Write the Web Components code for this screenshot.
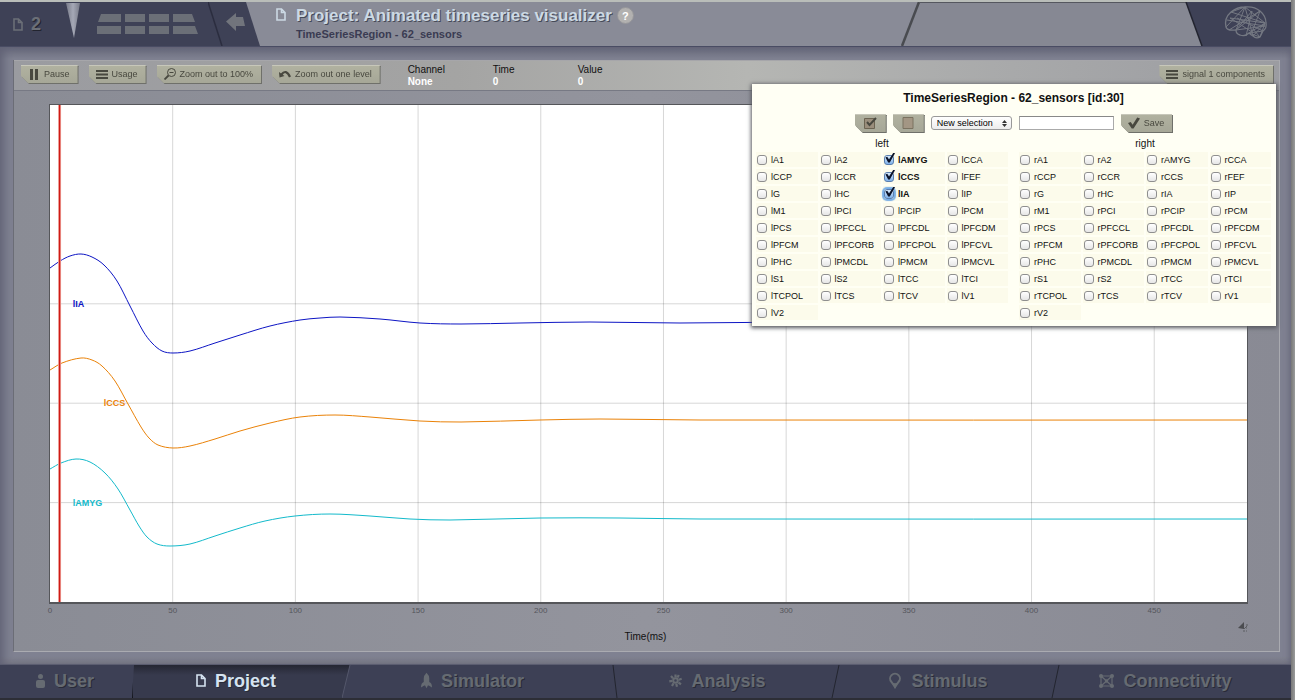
<!DOCTYPE html>
<html lang="en">
<head>
<meta charset="utf-8">
<title>Animated timeseries visualizer</title>
<style>
body { margin: 0; font-family: "Liberation Sans", Arial, sans-serif; font-size: 10px; line-height: 12px; color: #111; background: #8f9090; }
</style>
</head>
<body>
<app-shell>
  <app-header slot="header"></app-header>
  <work-area>
    <tool-bar slot="toolbar"></tool-bar>
    <time-chart></time-chart>
    <channel-panel slot="overlay" heading="TimeSeriesRegion - 62_sensors [id:30]"></channel-panel>
  </work-area>
  <nav-bar slot="footer"></nav-bar>
</app-shell>
<script>
const define = (name, html, setup) => customElements.define(name, class extends HTMLElement {
  constructor() {
    super();
    this.attachShadow({ mode: "open" });
  }
  connectedCallback() {
    const t = document.createElement("template");
    t.innerHTML = typeof html === "function" ? html(this) : html;
    this.shadowRoot.replaceChildren(t.content.cloneNode(true));
    if (setup) setup(this);
  }
});

const icons = {
  doc: '<svg width="10" height="13" viewBox="0 0 10 13" fill="none" stroke="currentColor" stroke-width="1.6"><path d="M1 1h4.500L9 4.500V12H1zM5.500 1v3.500H9"/></svg>',
  user: '<svg width="9" height="14" viewBox="0 0 9 14" fill="currentColor"><circle cx="4.500" cy="2.500" r="2.500"/><path d="M2 6h5q2 0 2 2v4q0 2-2 2H2q-2 0-2-2V8q0-2 2-2z"/></svg>',
  rocket: '<svg width="11" height="17" viewBox="0 0 12 17" fill="currentColor"><path d="M6 0Q3 3 3 6v4Q0 11 0 16l3.500-2h1L6 17l1.500-3h1L12 16q0-5-3-6V6q0-3-3-6z"/></svg>',
  gear: '<svg width="13" height="13" viewBox="0 0 13 13" stroke="currentColor"><circle cx="6.500" cy="6.500" r="2.300" fill="none" stroke-width="2"/><path d="M6.500 .5v3M2 2l2 2.300M.3 7.300l3-.5M3 12l1.500-2.700M8 12.700L7.300 9.700M12 10.300L9.500 8.500M12.700 4.800l-3 1M9.800 1L8.500 3.500" stroke-width="2.200"/></svg>',
  pin: '<svg width="14" height="17" viewBox="0 0 14 17"><path d="M7 15L3.500 10A4.900 4.900 0 1 1 10.500 10z" fill="none" stroke="currentColor" stroke-width="2"/><path d="M4 10.500q3 1.500 6 0L7 17z" fill="currentColor"/></svg>',
  net: '<svg width="15" height="14" viewBox="0 0 15 14" fill="none" stroke="currentColor" stroke-width="1.200"><path d="M2 2h11v10H2zM2 2l11 10M13 2L2 12"/><g fill="currentColor" stroke="none"><circle cx="2" cy="2" r="2"/><circle cx="13" cy="2" r="2"/><circle cx="2" cy="12" r="2"/><circle cx="13" cy="12" r="2"/><circle cx="7.500" cy="7" r="1.800"/></g></svg>',
  pause: '<svg width="12" height="11" viewBox="0 0 12 11" fill="currentColor"><path d="M2 0h3v11H2zM7 0h3v11H7z"/></svg>',
  bars: '<svg width="12" height="9" viewBox="0 0 12 9" fill="currentColor"><path d="M0 0h12v2H0zM0 3.500h12v2H0zM0 7h12v2H0z"/></svg>',
  zoom: '<svg width="12" height="12" viewBox="0 0 12 12" fill="none" stroke="currentColor"><circle cx="7.500" cy="4.500" r="4"/><path d="M5.500 4.500h4"/><path d="M4.500 7.500L.5 11.500" stroke-width="1.800"/></svg>',
  undo: '<svg width="12" height="10" viewBox="0 0 12 10"><path d="M2.500 5.500Q7-.5 11 8" fill="none" stroke="currentColor" stroke-width="2.200"/><path d="M0 3l5.500 4L.5 8.500z" fill="currentColor"/></svg>',
  boxcheck: '<svg width="13" height="12" viewBox="0 0 13 12" fill="none" stroke="currentColor"><path d="M.5 1.500h10v10H.5z" fill="#9a8e7c" stroke="#6c6452"/><path d="M3 5l2.500 3L12 1" stroke-width="2"/></svg>',
  box: '<svg width="13" height="12" viewBox="0 0 13 12"><path d="M1 .5h10v11H1z" fill="#a39684" stroke="#7a7260"/></svg>',
  check: '<svg width="12" height="12" viewBox="0 0 13 12"><path d="M0 6l3-1 2 3L10 0l3 1-7 11H4z" fill="currentColor"/></svg>'
};

define("app-shell", `
<style>
:host { display: block; padding-right: 4px; background: linear-gradient(90deg, #777, #9a9b9b) right / 4px 100% no-repeat; }
.page { display: flex; flex-direction: column; min-height: 100vh; box-sizing: border-box; border-top: 2px solid #b9bdb9; }
</style>
<div class="page"><slot name="header"></slot><slot></slot><slot name="footer"></slot></div>`);

define("app-header", `
<style>
:host { display: flex; height: 44px; background: #898b97; border-bottom: 1px solid #494c63; color: #6b6f77; overflow: hidden; }
.left { display: flex; align-items: center; width: 261px; flex: none; box-sizing: border-box; padding-left: 13px; background: #3e4156; clip-path: polygon(0 0, 246px 0, 260px 100%, 0 100%); }
.num { font: bold 18px/20px "Liberation Sans", sans-serif; margin-left: 8px; text-shadow: 1px 1px #22242f; }
.spike { align-self: start; margin-left: 24px; }
.blocks { margin-left: 16px; }
.sep { margin-left: 9px; }
.arrow { margin: 0 0 4px 2px; }
.title { flex: 1; display: flex; align-items: start; padding: 5px 0 0 15px; min-width: 0; white-space: nowrap; color: #ccd9e4; }
.title > svg { margin-top: 1px; }
.names { margin-left: 10px; }
h1 { margin: 0; font: bold 17px/18px "Liberation Sans", sans-serif; text-shadow: 1px 1px #454a58; }
h2 { margin: 2px 0 0; font: bold 11px/14px "Liberation Sans", sans-serif; color: #3a3b52; }
button { margin: 0 0 0 5px; padding: 0; width: 17px; height: 17px; border-radius: 50%; border: 1px solid #96969a; background: #b2b1b0; color: #fff; font: bold 11px/14px "Liberation Sans", sans-serif; }
.right { display: flex; flex: none; width: 390px; }
</style>
<div class="left">${icons.doc}<span class="num">2</span>
<svg class="spike" width="16" height="38" viewBox="0 0 16 38"><defs><linearGradient id="g"><stop offset="0" stop-color="#777a88"/><stop offset=".5" stop-color="#a5a8b6"/><stop offset="1" stop-color="#777a88"/></linearGradient></defs><path d="M1 1h14L9 36z" fill="url(#g)"/></svg>
<svg class="blocks" width="102" height="20" viewBox="0 0 102 20" fill="currentColor"><path d="M4 0h20v8H1zM28 0h20v8H28zM52 0h20v8H52zM76 0h19l3 8H76zM0 12h24v8H-2zM28 12h20v8H28zM52 12h20v8H52zM76 12h22l3 8H76z"/></svg>
<svg class="sep" width="16" height="44" viewBox="0 0 16 44"><path d="M0 0l14 44" stroke="#2b2d3f" stroke-width="1.500"/></svg>
<svg class="arrow" width="20" height="18" viewBox="0 0 20 18" fill="#71747c"><path d="M0 8.500L10 0v4h7l2 9h-9v5z"/></svg></div>
<div class="title">${icons.doc}<div class="names"><h1>Project: Animated timeseries visualizer</h1><h2>TimeSeriesRegion - 62_sensors</h2></div><button type="button" aria-label="Help">?</button></div>
<div class="right"><svg width="390" height="44" viewBox="0 0 390 44"><path d="M18 0H285l16 44H1z" fill="#868893"/><path d="M285 0H390V44H301z" fill="#3e4156"/><path d="M18 0L1 44" stroke="#494b50" stroke-width="2.500"/><path d="M18 .5H285" stroke="#55575f"/><path d="M285 0l16 44" stroke="#22242f" stroke-width="1.500"/>
<g fill="none" stroke="#747882" stroke-linejoin="round" transform="translate(324 4)"><path stroke-width="1.300" d="M1 21Q-1 12 6 6 12 1 20 1q9-1 15 4 6 5 6 12 1 5-3 8l-3 6q-4 2-7-1-2-1-4-3-4 4-9 2-4-1-4-5-9 1-10-3z"/><path d="M1 21L20 1 6 6l34 11L5 12l22 14L35 5 11 24 20 1l8 29 12-13L20 1M2 14l38 6-29 4L27 5l-6 25M35 5L4 24M24 27l14-2-26-13M35 31l5-14-16 10 11 4-7-8"/></g></svg></div>`);

define("work-area", `
<style>
:host { display: flex; position: relative; flex: 1; padding: 13px 11px 12px 13px; box-sizing: border-box; background: linear-gradient(#656779, #7f8191 12px, #7f8191 calc(100% - 8px), #7a7b87); box-shadow: inset 7px 0 8px -3px #626376, inset -4px 0 6px -3px #626376; }
.frame { flex: 1; display: flex; flex-direction: column; min-width: 0; background: linear-gradient(90deg, #8a8c95, #93949d 50%, #898a94); border: solid; border-width: 0 1px 1px; border-color: #6b6d76 #a9aab0 #aaabb1 #6b6d76; }
</style>
<div class="frame"><slot name="toolbar"></slot><slot></slot></div><slot name="overlay"></slot>`);

define("tool-button", el => `
<style>
:host { display: inline-block; filter: drop-shadow(1px 1px 0 #6f706a); }
button { display: flex; align-items: center; gap: 4px; height: 18px; margin: 0; padding: 0 8px 0 7px; border: 0; font: 9px/12px "Liberation Sans", sans-serif; color: #48483f; white-space: nowrap; background: linear-gradient(#b1b2a0, #a6a797); box-shadow: inset 0 1px #c7c7ba; clip-path: polygon(0 0, 100% 0, 100% 100%, 7px 100%, 0 calc(100% - 7px)); }
:host([icononly]) button { padding: 0 9px; }
</style>
<button type="button" ${el.hasAttribute("label") ? `aria-label="${el.getAttribute("label")}"` : ""}>${icons[el.getAttribute("icon")]}<slot></slot></button>`);

define("tool-bar", `
<style>
:host { display: flex; align-items: start; height: 31px; box-sizing: border-box; padding: 4px 6px 0 7px; gap: 11px; background: linear-gradient(90deg, #9a9ba0, #a4a4a3 35%, #b5b6b3 58%, #9b9ca1); border-bottom: 1px solid #777984; border-top: 1px solid #a6a6aa; white-space: nowrap; }
dl { display: flex; margin: -1px 0 0 17px; }
dl div { width: 85px; }
dt, dd { margin: 0; line-height: 12px; }
dd { color: #fff; font-weight: bold; }
.end { margin-left: auto; }
</style>
<tool-button icon="pause">Pause</tool-button>
<tool-button icon="bars">Usage</tool-button>
<tool-button icon="zoom">Zoom out to 100%</tool-button>
<tool-button icon="undo">Zoom out one level</tool-button>
<dl><div><dt>Channel</dt><dd>None</dd></div><div><dt>Time</dt><dd>0</dd></div><div><dt>Value</dt><dd>0</dd></div></dl>
<tool-button class="end" icon="bars">signal 1 components</tool-button>`);

const series = [
  { name: "lIA", color: "#0d15c4", x: "1.9%", y: "40%", points: [50,268,60,261,70,256,81,254,92,257,104,265,117,281,130,306,143,331,152,343,162,351,173,353,190,351,215,343,240,335,270,326,300,320,320,318,340,317,380,319,420,323,461,324,520,323,590,322,680,323,800,322,1247,322] },
  { name: "lCCS", color: "#ea8208", x: "4.5%", y: "60%", points: [50,370,62,363,81,358,92,360,102,366,115,381,128,404,141,427,149,438,158,445,173,448,190,446,215,439,240,431,270,423,300,417,335,415,370,417,420,421,461,422,540,420,600,419,700,420,1247,420] },
  { name: "lAMYG", color: "#13bacb", x: "1.9%", y: "80%", points: [50,469,61,463,76,459,90,462,105,473,118,489,130,510,139,526,147,537,157,544,170,546,190,544,215,536,240,528,265,521,295,516,330,514,370,516,410,519,450,520,540,518,620,518,700,519,1247,519] }
];
// Smooth curve through the samples, with control points at a third of the spacing.
const curve = p => {
  const n = p.length / 2, at = i => { i = Math.max(0, Math.min(n - 1, i)); return [p[2 * i], p[2 * i + 1]]; };
  const slope = i => { const a = at(i - 1), b = at(i + 1); return (b[1] - a[1]) / (b[0] - a[0]); };
  let d = `M${at(0)}`;
  for (let i = 0; i < n - 1; i++) {
    const a = at(i), b = at(i + 1), h = (b[0] - a[0]) / 3;
    d += `C${a[0] + h},${a[1] + slope(i) * h} ${b[0] - h},${b[1] - slope(i + 1) * h} ${b}`;
  }
  return d;
};
const ticks = [...Array(10).keys()];

define("time-chart", `
<style>
:host { display: flex; flex-direction: column; flex: 1; padding: 13px 31px 7px 35px; }
.plot { position: relative; flex: 1; min-height: 300px; background: #fff; border: solid #55565a; border-width: 1px 1px 2px; }
.plot svg { position: absolute; inset: 0; width: 100%; height: 100%; overflow: visible; }
.grid line { stroke: #000; stroke-opacity: .16; stroke-width: 1; }
.names text { font: bold 9px "Liberation Sans", sans-serif; }
.ticks text { font: 8px "Liberation Sans", sans-serif; fill: #55565c; text-anchor: middle; }
path { fill: none; stroke-width: 1; vector-effect: non-scaling-stroke; }
.foot { display: grid; grid-template-columns: 1fr auto 1fr; align-items: start; padding-top: 18px; height: 22px; line-height: 12px; }
.foot span { grid-column: 2; margin-top: 9px; margin-right: 6px; }
.foot svg { justify-self: end; }
</style>
<div class="plot"><svg role="img" aria-label="Time series of the selected channels">
<g class="grid">${ticks.slice(1).map(i => `<line x1="${i * 10.25}%" x2="${i * 10.25}%" y1="0" y2="100%"/>`).join("")}${[40, 60, 80].map(y => `<line x1="0" x2="100%" y1="${y}%" y2="${y}%"/>`).join("")}</g>
<svg viewBox="50 105 1197 497" preserveAspectRatio="none">${series.map(s => `<path d="${curve(s.points)}" stroke="${s.color}"/>`).join("")}</svg>
<line x1=".8%" x2=".8%" y1="0" y2="100%" stroke="#f3b5ae" stroke-width="3"/><line x1=".8%" x2=".8%" y1="0" y2="100%" stroke="#cf1a14" stroke-width="1.500"/>
<g class="names">${series.map(s => `<text x="${s.x}" y="${s.y}" dy="3" fill="${s.color}">${s.name}</text>`).join("")}</g>
<svg class="ticks" y="100%" height="14">${ticks.map(i => `<text x="${i * 10.25}%" y="11">${i * 50}</text>`).join("")}</svg>
</svg></div>
<div class="foot"><span>Time(ms)</span><svg width="10" height="10" viewBox="0 0 10 10"><path d="M0 6L6 0v7z" style="fill:#4b4c50"/><path d="M5 9h2M8 6h1M8 3h2M8 9h1M6 7l3-3" stroke="#5b5c60"/></svg></div>`);

define("channel-check", el => `
<style>
:host { display: block; background: #fcfbeb; }
label { display: flex; align-items: center; gap: 4px; height: 15px; padding-left: 1px; font-size: 9px; line-height: 12px; white-space: nowrap; color: #111; }
input { appearance: none; position: relative; flex: none; width: 10px; height: 10px; box-sizing: border-box; margin: 0; border: 1px solid #8f8f8f; border-radius: 3px; background: linear-gradient(#fff, #e6e6e6); }
input:checked { border-color: #5a7fb0; background: linear-gradient(#d7e8fa, #7fb1ea); }
input:checked::after { content: ""; position: absolute; left: 0; top: -3px; width: 10px; height: 10px; background: #0a1228; clip-path: polygon(5% 50%, 22% 42%, 40% 70%, 85% 0, 100% 8%, 48% 100%, 32% 100%); }
:host([focused]) input { box-shadow: 0 0 1px 2px #78aee6; }
:host([checked]) label { font-weight: bold; }
</style>
<label><input type="checkbox" ${el.hasAttribute("checked") ? "checked" : ""}><slot></slot></label>`);

const regions = "A1 A2 AMYG CCA CCP CCR CCS FEF G HC IA IP M1 PCI PCIP PCM PCS PFCCL PFCDL PFCDM PFCM PFCORB PFCPOL PFCVL PHC PMCDL PMCM PMCVL S1 S2 TCC TCI TCPOL TCS TCV V1 V2".split(" ");
const shown = new Set(["lAMYG", "lCCS", "lIA"]);
const side = (prefix, title) => `<div role="group" aria-label="${title}"><p>${title}</p><div class="cells">${regions.map(r => {
  const id = prefix + r;
  return `<channel-check${shown.has(id) ? " checked" : ""}${id === "lIA" ? " focused" : ""}>${id}</channel-check>`;
}).join("")}</div></div>`;

define("channel-panel", el => `
<style>
:host { display: block; position: absolute; top: 37px; right: 15px; width: 524px; box-sizing: border-box; padding: 6px 5px 6px 4px; background: #fffff4; box-shadow: 0 1px 4px 1px #55565c; }
h3 { margin: 0 0 8px; text-align: center; font: bold 12px/16px "Liberation Sans", sans-serif; }
.controls { display: flex; justify-content: center; align-items: center; gap: 7px; height: 18px; margin-bottom: 6px; }
.pick { position: relative; display: flex; }
select { appearance: none; width: 81px; height: 14px; margin: 0; padding: 0 0 0 5px; border: 1px solid #999; border-radius: 3px; background: linear-gradient(#fff, #ececec); font: 9px/12px "Liberation Sans", sans-serif; color: #000; }
.pick svg { position: absolute; right: 5px; top: 4px; pointer-events: none; }
input { width: 95px; height: 14px; box-sizing: border-box; margin: 0; padding: 0 3px; border: 1px solid #aaa; border-top-color: #888; background: #fff; font: 10px "Liberation Sans", sans-serif; }
.sides { display: grid; grid-template-columns: 1fr 1fr; gap: 11px; }
p { margin: 0 0 2px; text-align: center; line-height: 12px; }
.cells { display: grid; grid-template-columns: repeat(4, 1fr); gap: 2px; }
</style>
<h3>${el.getAttribute("heading")}</h3>
<div class="controls"><tool-button icon="boxcheck" icononly label="Select all"></tool-button><tool-button icon="box" icononly label="Clear selection"></tool-button>
<span class="pick"><select aria-label="Selection"><option>New selection</option></select><svg width="5" height="7" viewBox="0 0 5 7" fill="#333"><path d="M0 3l2.500-3L5 3zM0 4h5L2.500 7z"/></svg></span>
<input type="text" aria-label="Selection name"><tool-button icon="check">Save</tool-button></div>
<div class="sides">${side("l", "left")}${side("r", "right")}</div>`);

define("nav-bar", `
<style>
:host { display: block; height: 36px; box-sizing: border-box; border-top: 1px solid #5b5d70; border-bottom: 2px solid #2d2e36; background: #3d4055; }
nav { display: grid; grid-template-columns: 132fr 214fr 269fr 221fr 220fr 235fr; height: 100%; }
a { position: relative; display: flex; align-items: center; justify-content: center; gap: 9px; box-sizing: border-box; padding: 0 16px 2px 0; min-width: 0; font: bold 18px/20px "Liberation Sans", sans-serif; color: #666b72; text-decoration: none; text-shadow: 1px 1px #292b38; }
a svg { flex: none; }
.user { padding-right: 2px; }
.active { padding-right: 6px; color: #d5e3f0; }
.active::before { content: ""; position: absolute; inset: 0 -4px 0 0; background: linear-gradient(#252733, #373a4d 10px); clip-path: polygon(2px 0, 100% 0, calc(100% - 8px) 100%, 0 100%); border-left: 1px solid #14151d; }
.active > * { position: relative; }
.edge { position: absolute; left: -5px; top: 0; height: 100%; stroke: #23252f; fill: none; }
.light { left: -4px; stroke: #54576b; }
</style>
<nav>
<a class="user" href="#user">${icons.user}<span>User</span></a>
<a class="active" href="#project" aria-current="page">${icons.doc}<span>Project</span></a>
<a href="#simulator"><svg class="edge light" width="10" height="33"><path d="M8 0L0 33"/></svg>${icons.rocket}<span>Simulator</span></a>
<a href="#analysis"><svg class="edge" width="10" height="33"><path d="M3 0l4 33"/></svg>${icons.gear}<span>Analysis</span></a>
<a href="#stimulus"><svg class="edge" width="10" height="33"><path d="M8 0L1 33"/></svg>${icons.pin}<span>Stimulus</span></a>
<a href="#connectivity"><svg class="edge" width="10" height="33"><path d="M8 0L1 33"/></svg>${icons.net}<span>Connectivity</span></a>
</nav>`);
</script>
</body>
</html>
